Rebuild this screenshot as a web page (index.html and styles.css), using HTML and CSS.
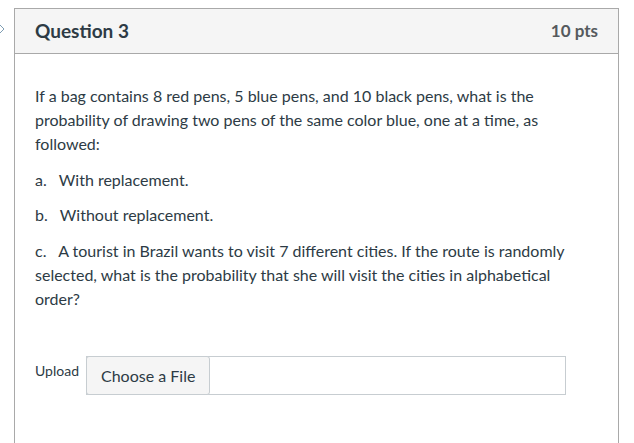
FILE: index.html
```html
<!DOCTYPE html>
<html>
<head>
<meta charset="utf-8">
<link rel="stylesheet" href="styles.css">
</head>
<body>
<div class="page">
  <svg class="chevron" width="8" height="14" viewBox="0 0 8 14"><polyline points="-2,1 4,7 -2,13" fill="none" stroke="#7f9db3" stroke-width="1"/></svg>
  <div class="card">
    <div class="card-header">
      <h2 class="title">Question 3</h2>
      <span class="pts">10 pts</span>
    </div>
    <div class="card-body">
      <p>If a bag contains 8 red pens, 5 blue pens, and 10 black pens, what is the probability of drawing two pens of the same color blue, one at a time, as followed:</p>
      <p>a.&nbsp;&nbsp; With replacement.</p>
      <p>b.&nbsp;&nbsp; Without replacement.</p>
      <p>c.&nbsp;&nbsp; A tourist in Brazil wants to visit 7 different cities. If the route is randomly selected, what is the probability that she will visit the cities in alphabetical order?</p>
      <div class="upload">
        <span class="upload-label">Upload</span>
        <div class="file-box">
          <span class="file-btn">Choose a File</span>
        </div>
      </div>
    </div>
  </div>
</div>
</body>
</html>
```
FILE: styles.css
```css
html, body {
  margin: 0;
  padding: 0;
  background: #fff;
  font-family: Lato, "Noto Sans", sans-serif;
  color: #2d3b45;
}
.page {
  position: relative;
  padding: 8px 15px 0 14px;
  height: 435px;
  overflow: hidden;
}
.chevron {
  position: absolute;
  left: 0;
  top: 22px;
}
.card {
  border: 1px solid #a9a9a9;
  border-bottom: none;
  height: 440px;
}
.card-header {
  display: flex;
  align-items: center;
  justify-content: space-between;
  background: #f5f5f5;
  border-bottom: 1px solid #a9a9a9;
  height: 44px;
  padding: 0 20px 0 20px;
}
.title {
  margin: 0;
  font-size: 19px;
  font-weight: 700;
  color: #2d3b45;
  padding-bottom: 1px;
}
.pts {
  font-size: 17px;
  font-weight: 700;
  color: #555a5e;
  padding-bottom: 1px;
}
.card-body {
  padding: 18.4px 20px 0 20px;
}
.card-body p {
  margin: 11.6px 0 0 0;
  font-size: 16px;
  line-height: 24px;
  color: #2d3b45;
}
.upload {
  display: flex;
  align-items: flex-start;
  margin-top: 45px;
}
.upload-label {
  font-size: 14px;
  line-height: 18px;
  padding-top: 6px;
  width: 51px;
  flex: none;
}
.file-box {
  width: 478px;
  height: 37px;
  border: 1px solid #c7cdd1;
  display: flex;
  align-items: stretch;
}
.file-btn {
  display: flex;
  align-items: center;
  padding: 0 14px;
  background: #f5f5f5;
  border: 1px solid #c7cdd1;
  border-radius: 3px;
  margin: -1px 0 -1px -1px;
  font-size: 16px;
  color: #2d3b45;
}
```
